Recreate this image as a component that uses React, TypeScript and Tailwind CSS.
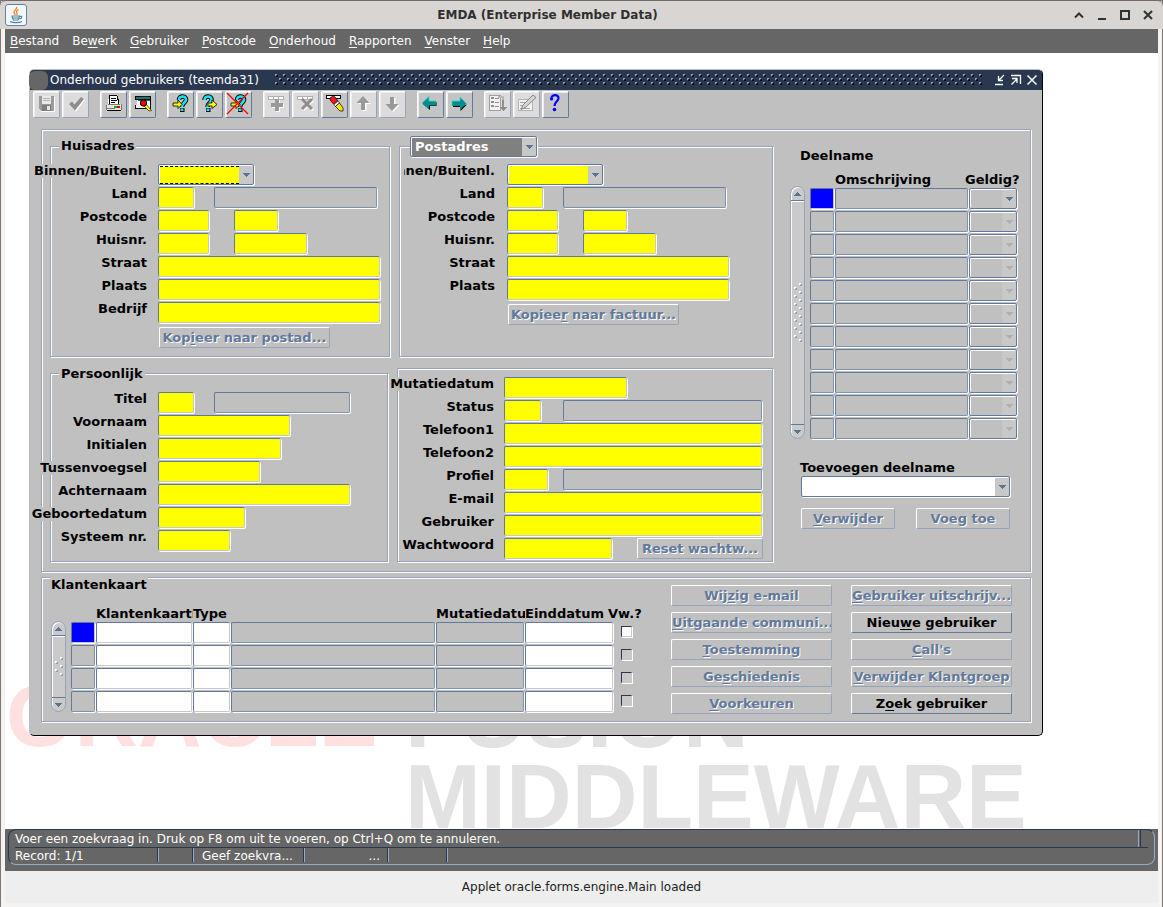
import React from "react";

const FONT = "font-['DejaVu_Sans',sans-serif]";
const ETCHED = "border border-[#95a5b9] shadow-[1px_1px_0_#fff,inset_1px_1px_0_#fff]";

/* ---------- small building blocks ---------- */

function Mnemonic({ text, at }: { text: string; at?: number }) {
  if (at === undefined) return <>{text}</>;
  return (
    <>
      {text.slice(0, at)}
      <span className="underline decoration-1 underline-offset-2">{text[at]}</span>
      {text.slice(at + 1)}
    </>
  );
}

type FieldKind = "query" | "readonly" | "plain" | "current";

const KIND: Record<FieldKind, string> = {
  query: "bg-[#ffff00] border-r-[#c8c8c8] border-b-[#c8c8c8]",
  plain: "bg-white border-r-[#c8c8c8] border-b-[#c8c8c8]",
  readonly: "bg-[#c0c0c0] border-r-[#7f92ad] border-b-[#7f92ad]",
  current: "bg-[#0000ff] border-r-[#c8c8c8] border-b-[#c8c8c8]",
};

function Field({ id, label, kind = "query", className }: { id?: string; label?: string; kind?: FieldKind; className: string }) {
  return (
    <input
      id={id}
      aria-label={label}
      readOnly={kind === "readonly" || kind === "current"}
      className={`block h-[21px] rounded-xs border border-t-[#62799b] border-l-[#62799b] px-1 shadow-[1px_1px_0_#fff] outline-none ${KIND[kind]} ${className}`}
    />
  );
}

function Combo({ id, label, options = [""], className, tone = "bg-[#ffff00]", dim = false, focused = false }: {
  id?: string; label?: string; options?: string[]; className: string; tone?: string; dim?: boolean; focused?: boolean;
}) {
  return (
    <div className={`relative flex h-[21px] rounded-xs border border-[#62799b] bg-[#c8c8c8] shadow-[1px_1px_0_#fff,inset_1px_1px_0_#fff] ${className}`}>
      <select
        id={id}
        aria-label={label}
        className={`mt-px ml-px mr-3.5 min-w-0 flex-1 appearance-none pl-[3px] text-[13px] leading-4 font-bold outline-none ${tone} ${focused ? "border-y border-dashed border-black" : ""}`}
      >
        {options.map((o) => (
          <option key={o}>{o}</option>
        ))}
      </select>
      <svg viewBox="0 0 8 4" className="pointer-events-none absolute top-2 right-0.5 h-1 w-2" shapeRendering="crispEdges">
        <path d="M0 0h7v1H0zM1 1h5v1H1zM2 2h3v1H2zM3 3h1v1H3z" fill={dim ? "#b0b0b0" : "#5b7396"} />
      </svg>
    </div>
  );
}

function PushButton({ text, at, enabled = false, className = "" }: { text: string; at?: number; enabled?: boolean; className?: string }) {
  return (
    <button
      type="button"
      disabled={!enabled}
      className={`h-[21px] overflow-hidden rounded-xs border border-t-white border-l-white text-center text-[13px] leading-4 font-bold whitespace-nowrap ${
        enabled ? "border-r-[#62799b] border-b-[#62799b] text-black" : "border-r-[#95a5b9] border-b-[#95a5b9] text-[#62799b] [text-shadow:1px_1px_0_#fff]"
      } ${className}`}
    >
      <Mnemonic text={text} at={at} />
    </button>
  );
}

function Row({ label, htmlFor, labelClass, children }: { label: string; htmlFor: string; labelClass: string; children: React.ReactNode }) {
  return (
    <div className="flex h-[23px] items-start">
      <div className={`flex shrink-0 justify-end ${labelClass}`}>
        <label htmlFor={htmlFor} className="bg-[#c0c0c0] leading-[14px] whitespace-nowrap">{label}</label>
      </div>
      {children}
    </div>
  );
}

function ScrollBar({ className, gripRows }: { className: string; gripRows: number }) {
  return (
    <div className={`flex w-[15px] shrink-0 flex-col overflow-hidden rounded-full border border-[#95a5b9] bg-[#cacaca] shadow-[inset_1px_1px_0_#fff] ${className}`}>
      <button type="button" aria-label="Omhoog" className="flex h-3.5 items-center justify-center border-b border-[#62799b] shadow-[0_1px_0_#fff]">
        <svg viewBox="0 0 7 4" className="h-1 w-[7px]" shapeRendering="crispEdges"><path d="M3 0h1v1H3zM2 1h3v1H2zM1 2h5v1H1zM0 3h7v1H0z" fill="#5b7396" /></svg>
      </button>
      <div className="flex flex-1 items-center justify-center">
        <svg width="8" height={gripRows * 4} shapeRendering="crispEdges">
          {Array.from({ length: gripRows }, (_, i) => {
            const x = i % 2 ? 0 : 5;
            return (
              <g key={i}>
                <path d={`M${x} ${i * 4}h2v1h-1v1h-1z`} fill="#fff" />
                <path d={`M${x + 2} ${i * 4 + 1}h1v2h-2v-1h1z`} fill="#8ea0b8" />
              </g>
            );
          })}
        </svg>
      </div>
      <button type="button" aria-label="Omlaag" className="flex h-3.5 items-center justify-center border-t border-[#62799b]">
        <svg viewBox="0 0 7 4" className="h-1 w-[7px]" shapeRendering="crispEdges"><path d="M0 0h7v1H0zM1 1h5v1H1zM2 2h3v1H2zM3 3h1v1H3z" fill="#5b7396" /></svg>
      </button>
    </div>
  );
}

/* ---------- toolbar ---------- */

function QueryMark({ d, dotX }: { d: string; dotX: number }) {
  return (
    <g shapeRendering="auto" fill="none">
      <path d={d} stroke="#000" strokeWidth="4.5" />
      <path d={d} stroke="#19e3f5" strokeWidth="2.6" />
      <path d={`M${dotX - 2} 17h4.500v4h-4.500z`} fill="#000" />
      <path d={`M${dotX - 1.5} 17.500h3v2.500h-3z`} fill="#19e3f5" />
    </g>
  );
}

const ENTER_ARROW = <path d="M6 12h5V9l4 4.500-4 4V15H6z" fill="#ff0" stroke="#000" strokeWidth=".8" shapeRendering="auto" />;

const ICONS: Record<string, React.ReactNode> = {
  save: (
    <>
      <path d="M6 5h15v15H8l-2-2z" fill="#9a9a9a" />
      <path d="M9 5h9v8H9z" fill="#e9e9e9" />
      <path d="M10 7h7v1h-7zM10 9h7v1h-7z" fill="#b4b4b4" />
      <path d="M9 14h9v6H9z" fill="#7c7c7c" />
      <path d="M14 15h3v4h-3z" fill="#e6e6e6" />
      <path d="M21 6h1v15H8v-1h13z" fill="#fff" />
    </>
  ),
  check: (
    <g shapeRendering="auto">
      <path d="M8 14l3-2.500 2.500 3L20 7l3 2-9 11.500z" fill="#fff" />
      <path d="M7 13l3-2.500 2.500 3L19 6l3 2-9 11.500z" fill="#8e8e8e" />
    </g>
  ),
  print: (
    <>
      <path d="M9 4h8l3 9H8z" fill="#fff" />
      <path d="M9 4h8v1h1v3h1v5h-1V9h-1V5h-7v8H9z" fill="#000" />
      <path d="M11 7h5v1h-5zM11 9h6v1h-6zM11 11h4v1h-4z" fill="#000" />
      <path d="M7 13h14v6H7z" fill="#e4e4da" />
      <path d="M6 14h1v5H6zM21 13h1v6h-1zM8 13h12v1H8zM7 17h8v1H7z" fill="#777" />
      <path d="M14 15h3v2h-3z" fill="#0b0" />
      <path d="M17 15h3v2h-3z" fill="#e00" />
      <path d="M7 19h14v1H7z" fill="#000" />
    </>
  ),
  list: (
    <>
      <path d="M6.500 5.500h15v3h-15z" fill="#008080" stroke="#000" />
      <path d="M6.500 8.500h15v9h-15z" fill="#fff" stroke="#000" />
      <path d="M6 9h2v5H6z" fill="#c4c4c4" />
      <path d="M9 9h12v1H9z" fill="#008080" />
      <g shapeRendering="auto">
        <path d="M17 13l5.500 6.500-2.500.5-5-5z" fill="#ff0" stroke="#000" strokeWidth=".6" />
        <circle cx="14.500" cy="12" r="3.200" fill="#f00" stroke="#000" />
      </g>
    </>
  ),
  enter: (
    <>
      <QueryMark d="M12 9c0-5 7.500-4.500 7 0-.3 2.500-4 3-4 7" dotX={15} />
      {ENTER_ARROW}
    </>
  ),
  execute: (
    <>
      <QueryMark d="M8.500 9c0-5 7.500-4.500 7 0-.3 2.500-4 3-4 7" dotX={12} />
      <path d="M12 12h4V9l5 4.500-5 4V15h-4z" fill="#ff0" stroke="#000" strokeWidth=".8" shapeRendering="auto" />
    </>
  ),
  cancel: (
    <>
      <QueryMark d="M12 9c0-5 7.500-4.500 7 0-.3 2.500-4 3-4 7" dotX={15} />
      {ENTER_ARROW}
      <path d="M2 2l21 21M23 2L2 23" stroke="#f00" strokeWidth="1.300" shapeRendering="auto" />
    </>
  ),
  insert: (
    <>
      <path d="M5.500 5.500h15v3h-15z" fill="#fff" stroke="#b0b0b0" />
      <path d="M10.500 5v4M15.500 5v4" stroke="#b0b0b0" />
      <path d="M13 9h4v4h4v4h-4v4h-4v-4H9v-4h4z" fill="#fff" />
      <path d="M12 8h4v4h4v4h-4v4h-4v-4H8v-4h4z" fill="#9a9a9a" />
    </>
  ),
  remove: (
    <>
      <path d="M5.500 5.500h15v3h-15z" fill="#fff" stroke="#b0b0b0" />
      <path d="M10.500 5v4M15.500 5v4" stroke="#b0b0b0" />
      <g shapeRendering="auto" strokeWidth="3">
        <path d="M11 9l10 10M21 9L11 19" stroke="#fff" />
        <path d="M10 8l10 10M20 8L10 18" stroke="#8e8e8e" />
      </g>
    </>
  ),
  clear: (
    <>
      <path d="M5 4h15v4H5z" fill="#000" />
      <path d="M6 5h13v2H6z" fill="#fff" />
      <g shapeRendering="auto">
        <path d="M9.500 7c1-1.800 3-2.300 4.500-1l3 4-4 3.500-3.500-4c-.6-1-.5-1.600 0-2.500z" fill="#f01818" stroke="#000" strokeWidth=".7" />
        <path d="M13 13.500l4-3.500 1.500 2-4 3.500z" fill="#fff" stroke="#000" strokeWidth=".6" />
        <path d="M14.500 15.500l4-3.500 3.500 5v3h-3z" fill="#ffe800" stroke="#000" strokeWidth=".7" />
      </g>
    </>
  ),
  up: (
    <g shapeRendering="auto">
      <path d="M14 6l7 7h-4.500v7h-4v-7H8z" fill="#fff" />
      <path d="M13 5l6.500 7H15v7h-4v-7H6.500z" fill="#999" />
    </g>
  ),
  down: (
    <g shapeRendering="auto">
      <path d="M14 21l7-7h-4.500V7h-4v7H8z" fill="#fff" />
      <path d="M13 20l6.500-7H15V6h-4v7H6.500z" fill="#999" />
    </g>
  ),
  prev: (
    <g shapeRendering="auto">
      <path d="M6 13l7 6v-4h6.500v-4H19v3z" fill="#000" />
      <path d="M5 12l7-6.500V10h7v4.500h-7v4z" fill="#008c8c" />
      <path d="M5 12l7-6.500V10h7" fill="none" stroke="#30d8d8" strokeWidth=".8" />
    </g>
  ),
  next: (
    <g shapeRendering="auto">
      <path d="M21 13.500L14.500 20v-4H7v-1h8z" fill="#000" />
      <path d="M20.500 12.500L14 6v4H6v5h8v4z" fill="#008c8c" />
      <path d="M6 15v-5h8V6l6.500 6.500" fill="none" stroke="#30d8d8" strokeWidth=".8" />
    </g>
  ),
  block: (
    <>
      <path d="M5.500 4.500h11v15h-11z" fill="#f2f2f2" stroke="#a0a0a0" />
      <path d="M7 6h3v2H7zM7 10h3v2H7zM7 14h3v2H7zM11 7h4v1h-4zM11 11h4v1h-4zM11 15h4v1h-4z" fill="#8e8e8e" />
      <path d="M14 5h6v4h-2V7h-4z" fill="#b8b8b8" />
      <path d="M18 9h2v7h3l-4 4-4-4h3z" fill="#8e8e8e" />
    </>
  ),
  edit: (
    <>
      <path d="M5.500 8.500h14v11h-14z" fill="#f2f2f2" stroke="#b4b4b4" />
      <path d="M7 11h8v1H7zM7 14h6v1H7zM7 17h10v1H7z" fill="#a4a4a4" />
      <path d="M20 4l3 2.500L13 16l-5 2.500 2-4.500z" fill="#d4d4d4" stroke="#848484" shapeRendering="auto" />
    </>
  ),
  help: (
    <g shapeRendering="auto">
      <path d="M9.500 8.500C8.500 3 17 2.500 16.500 7.500c-.3 3-4 3.500-4 7.500" fill="none" stroke="#0000ff" strokeWidth="2.200" />
      <circle cx="9.500" cy="8" r="1.500" fill="#0000ff" />
      <circle cx="12.500" cy="18.500" r="1.800" fill="#0000ff" />
    </g>
  ),
};

const TOOLBAR: { icon: string; label: string; off?: boolean }[][] = [
  [{ icon: "save", label: "Opslaan", off: true }, { icon: "check", label: "Akkoord", off: true }],
  [{ icon: "print", label: "Afdrukken" }, { icon: "list", label: "Zoeklijst" }],
  [{ icon: "enter", label: "Zoekvraag invoeren" }, { icon: "execute", label: "Zoekvraag uitvoeren" }, { icon: "cancel", label: "Zoekvraag annuleren" }],
  [
    { icon: "insert", label: "Record invoegen", off: true },
    { icon: "remove", label: "Record verwijderen", off: true },
    { icon: "clear", label: "Record wissen" },
    { icon: "up", label: "Vorig record", off: true },
    { icon: "down", label: "Volgend record", off: true },
  ],
  [{ icon: "prev", label: "Vorig blok" }, { icon: "next", label: "Volgend blok" }],
  [{ icon: "block", label: "Keuzelijst", off: true }, { icon: "edit", label: "Bewerken", off: true }, { icon: "help", label: "Help" }],
];

function Toolbar() {
  return (
    <div className="flex gap-[11px] pt-px pl-[3px]">
      {TOOLBAR.map((group, i) => (
        <div key={i} className="flex gap-0.5">
          {group.map((b) => (
            <button
              key={b.icon}
              type="button"
              aria-label={b.label}
              disabled={b.off}
              className={`size-[27px] rounded-xs border border-t-white border-l-white shadow-[inset_1px_1px_0_#ededed] ${
                b.off ? "border-r-[#95a5b9] border-b-[#95a5b9] bg-[#dcdcdc]" : "border-r-[#62799b] border-b-[#62799b] bg-[#c4c4c4]"
              }`}
            >
              <svg viewBox="1 1 25 25" className="size-[25px]" shapeRendering="crispEdges">{ICONS[b.icon]}</svg>
            </button>
          ))}
        </div>
      ))}
    </div>
  );
}

/* ---------- form sections ---------- */

function AddressFields({ prefix, label, rows, focused }: { prefix: string; label: string; rows: number; focused?: boolean }) {
  const all = [
    { name: "Binnen/Buitenl.", key: "bb", el: <Combo id={`${prefix}-bb`} className="w-[96px]" focused={focused} /> },
    { name: "Land", key: "land", el: <><Field id={`${prefix}-land`} className="w-9" /><Field kind="readonly" label="Landnaam" className="ml-5 w-[163px]" /></> },
    { name: "Postcode", key: "pc", el: <><Field id={`${prefix}-pc`} className="w-[51px]" /><Field label="Postcode letters" className="ml-[25px] w-[44px]" /></> },
    { name: "Huisnr.", key: "nr", el: <><Field id={`${prefix}-nr`} className="w-[51px]" /><Field label="Toevoeging" className="ml-[25px] w-[73px]" /></> },
    { name: "Straat", key: "str", el: <Field id={`${prefix}-str`} className="w-[222px]" /> },
    { name: "Plaats", key: "pl", el: <Field id={`${prefix}-pl`} className="w-[222px]" /> },
    { name: "Bedrijf", key: "bd", el: <Field id={`${prefix}-bd`} className="w-[222px]" /> },
  ];
  return (
    <>
      {all.slice(0, rows).map((r) => (
        <Row key={r.key} label={r.name} htmlFor={`${prefix}-${r.key}`} labelClass={label}>{r.el}</Row>
      ))}
    </>
  );
}

function HomeAddress() {
  return (
    <section className={`h-[211px] ${ETCHED}`}>
      <h2 className="-mt-[9px] ml-2 w-fit bg-[#c0c0c0] px-0.5 leading-4">Huisadres</h2>
      <div className="pt-2.5">
        <AddressFields prefix="huis" label="mr-[11px] w-[96px]" rows={7} focused />
        <PushButton text="Kopieer naar postad..." at={3} className="mt-0.5 ml-[108px] w-[171px]" />
      </div>
    </section>
  );
}

function PostalAddress() {
  return (
    <section className={`h-[211px] ${ETCHED}`}>
      <Combo
        label="Adressoort"
        options={["Postadres", "Factuuradres"]}
        tone="bg-[#808080] text-white"
        className="-mt-[11px] ml-2.5 w-[127px]"
      />
      <div className="pt-[7px]">
        <AddressFields prefix="post" label="ml-1 mr-3 w-[91px] overflow-hidden" rows={6} />
        <PushButton text="Kopieer naar factuur..." at={6} className="mt-0.5 ml-[108px] w-[171px]" />
      </div>
    </section>
  );
}

function Personal() {
  const rows: [string, string][] = [
    ["Voornaam", "w-[132px]"],
    ["Initialen", "w-[123px]"],
    ["Tussenvoegsel", "w-[102px]"],
    ["Achternaam", "w-[192px]"],
    ["Geboortedatum", "w-[87px]"],
    ["Systeem nr.", "w-[72px]"],
  ];
  return (
    <section className={`mt-4 mr-0.5 h-[189px] ${ETCHED}`}>
      <h2 className="-mt-2 ml-2 w-fit bg-[#c0c0c0] px-0.5 leading-4">Persoonlijk</h2>
      <div className="pt-2.5">
        <Row label="Titel" htmlFor="p-titel" labelClass="mr-[11px] w-[96px]">
          <Field id="p-titel" className="w-9" />
          <Field kind="readonly" label="Titelomschrijving" className="ml-5 w-[136px]" />
        </Row>
        {rows.map(([name, w]) => (
          <Row key={name} label={name} htmlFor={`p-${name}`} labelClass="mr-[11px] w-[96px]">
            <Field id={`p-${name}`} className={w} />
          </Row>
        ))}
      </div>
    </section>
  );
}

function Contact() {
  const lc = "mr-2.5 w-[96px]";
  return (
    <section className={`mt-[11px] -ml-0.5 h-[194px] pt-2 ${ETCHED}`}>
      <Row label="Mutatiedatum" htmlFor="c-mut" labelClass={lc}><Field id="c-mut" className="w-[123px]" /></Row>
      <Row label="Status" htmlFor="c-status" labelClass={lc}>
        <Field id="c-status" className="w-[37px]" />
        <Field kind="readonly" label="Statusomschrijving" className="ml-[22px] w-[199px]" />
      </Row>
      <Row label="Telefoon1" htmlFor="c-tel1" labelClass={lc}><Field id="c-tel1" className="w-[258px]" /></Row>
      <Row label="Telefoon2" htmlFor="c-tel2" labelClass={lc}><Field id="c-tel2" className="w-[258px]" /></Row>
      <Row label="Profiel" htmlFor="c-profiel" labelClass={lc}>
        <Field id="c-profiel" className="w-[44px]" />
        <Field kind="readonly" label="Profielomschrijving" className="ml-[15px] w-[199px]" />
      </Row>
      <Row label="E-mail" htmlFor="c-mail" labelClass={lc}><Field id="c-mail" className="w-[258px]" /></Row>
      <Row label="Gebruiker" htmlFor="c-gebr" labelClass={lc}><Field id="c-gebr" className="w-[258px]" /></Row>
      <Row label="Wachtwoord" htmlFor="c-ww" labelClass={lc}>
        <Field id="c-ww" className="w-[108px]" />
        <PushButton text="Reset wachtw..." className="ml-[25px] w-[126px]" />
      </Row>
    </section>
  );
}

function Participation() {
  return (
    <section className="ml-[17px] min-w-0 flex-1 pr-3">
      <h2 className="ml-2.5 pt-[18px] leading-4">Deelname</h2>
      <div className="flex items-end pt-2">
        <ScrollBar className="mb-px h-[253px]" gripRows={15} />
        <div className="ml-[5px] min-w-0 flex-1">
          <table className="w-full table-fixed border-separate border-spacing-0">
            <colgroup>
              <col className="w-[25px]" />
              <col />
              <col className="w-[49px]" />
            </colgroup>
            <thead>
              <tr className="text-left leading-[15px]">
                <th className="p-0"></th>
                <th className="p-0">Omschrijving</th>
                <th className="p-0"><div className="-ml-1 whitespace-nowrap">Geldig?</div></th>
              </tr>
            </thead>
            <tbody>
              {Array.from({ length: 11 }, (_, i) => (
                <tr key={i} className="h-[23px]">
                  <td className="p-0 pr-px"><Field kind={i === 0 ? "current" : "readonly"} label={`Recordindicator ${i + 1}`} className="w-full" /></td>
                  <td className="p-0 pr-px"><Field kind="readonly" label={`Omschrijving ${i + 1}`} className="w-full" /></td>
                  <td className="p-0 pr-px"><Combo label={`Geldig ${i + 1}`} tone="bg-[#c0c0c0]" dim={i > 0} className="w-full" /></td>
                </tr>
              ))}
            </tbody>
          </table>
        </div>
      </div>
      <div className="mr-2 ml-[11px]">
        <label htmlFor="toevoegen" className="-ml-px mt-5 block leading-4">Toevoegen deelname</label>
        <Combo id="toevoegen" tone="bg-white" className="" />
        <div className="mt-[11px] flex justify-between">
          <PushButton text="Verwijder" at={0} className="w-[94px]" />
          <PushButton text="Voeg toe" className="w-[94px]" />
        </div>
      </div>
    </section>
  );
}

function CustomerCards() {
  const actions: [string, number, boolean][][] = [
    [["Wijzig e-mail", 3, false], ["Uitgaande communi...", 0, false], ["Toestemming", 0, false], ["Geschiedenis", 2, false], ["Voorkeuren", 0, false]],
    [["Gebruiker uitschrijv...", 0, false], ["Nieuwe gebruiker", 4, true], ["Call's", 0, false], ["Verwijder Klantgroep", 0, false], ["Zoek gebruiker", 1, true]],
  ];
  return (
    <section className={`mx-[11px] mt-[5px] h-[145px] ${ETCHED}`}>
      <div className="flex">
        <div className="flex min-w-0 flex-1 flex-col">
          <h2 className="-mt-px ml-2 w-fit bg-[#c0c0c0] px-px pt-px leading-[14px]">Klantenkaart</h2>
          <div className="flex items-end pt-3.5 pl-[9px]">
            <ScrollBar className="mb-px h-[91px]" gripRows={5} />
            <div className="ml-[5px] min-w-0 flex-1">
              <table className="w-full table-fixed border-separate border-spacing-0">
                <colgroup>
                  <col className="w-[25px]" />
                  <col className="w-[97px]" />
                  <col className="w-[38px]" />
                  <col />
                  <col className="w-[89px]" />
                  <col className="w-[89px]" />
                  <col className="w-[29px]" />
                </colgroup>
                <thead>
                  <tr className="text-left leading-[15px]">
                    <th className="p-0"></th>
                    <th className="p-0"><div className="overflow-hidden whitespace-nowrap">Klantenkaartnr</div></th>
                    <th className="p-0">Type</th>
                    <th className="p-0"></th>
                    <th className="p-0"><div className="overflow-hidden whitespace-nowrap">Mutatiedatum</div></th>
                    <th className="p-0">Einddatum</th>
                    <th className="p-0"><div className="-ml-1.5 whitespace-nowrap">Vw.?</div></th>
                  </tr>
                </thead>
                <tbody>
                  {[1, 2, 3, 4].map((n) => (
                    <tr key={n} className="h-[23px]">
                      <td className="p-0 pr-px"><Field kind={n === 1 ? "current" : "readonly"} label={`Kaartindicator ${n}`} className="w-full" /></td>
                      <td className="p-0 pr-px"><Field kind="plain" label={`Klantenkaartnr ${n}`} className="w-full" /></td>
                      <td className="p-0 pr-px"><Field kind="plain" label={`Type ${n}`} className="w-full" /></td>
                      <td className="p-0 pr-px"><Field kind="readonly" label={`Type omschrijving ${n}`} className="w-full" /></td>
                      <td className="p-0 pr-px"><Field kind="readonly" label={`Mutatiedatum ${n}`} className="w-full" /></td>
                      <td className="p-0 pr-px"><Field kind="plain" label={`Einddatum ${n}`} className="w-full" /></td>
                      <td className="p-0 pt-[5px] pl-[7px] align-top">
                        <input
                          type="checkbox"
                          aria-label={`Vervallen ${n}`}
                          className={`block size-[11px] appearance-none border border-t-[#29374f] border-l-[#29374f] border-r-[#c8c8c8] border-b-[#c8c8c8] shadow-[1px_1px_0_#fff] ${n === 1 ? "bg-white" : "bg-[#c8c8c8]"}`}
                        />
                      </td>
                    </tr>
                  ))}
                </tbody>
              </table>
            </div>
          </div>
        </div>
        <div className="mt-[7px] mr-[18px] ml-7 flex gap-[19px]">
          {actions.map((col, i) => (
            <div key={i} className="flex w-[161px] flex-col gap-1.5">
              {col.map(([t, at, on]) => <PushButton key={t} text={t} at={at} enabled={on} />)}
            </div>
          ))}
        </div>
      </div>
    </section>
  );
}

/* ---------- windows ---------- */

function FormWindow() {
  return (
    <main className="relative mt-4 mr-[115px] ml-6 rounded-[5px] border border-t-[#b9bec6] border-l-[#b9bec6] border-r-black border-b-black bg-[#c0c0c0] pb-[13px] text-[13px] font-bold text-black">
      <header className="flex h-5 items-center rounded-t-sm bg-[#29374f] font-normal text-white">
        <span className="-ml-px size-[19px] rounded-md bg-[#666]" />
        <h1 className="ml-0.5 text-[12px] leading-4 whitespace-nowrap">Onderhoud gebruikers (teemda31)</h1>
        <svg className="mr-[11px] ml-4 h-3 flex-1" shapeRendering="crispEdges" aria-hidden="true">
          <defs>
            <pattern id="grip" width="8" height="8" patternUnits="userSpaceOnUse">
              <path d="M0 0h2v1H1v1H0zM4 4h2v1H5v1H4z" fill="#8ea3c0" />
              <path d="M2 1h1v2H1V2h1zM6 5h1v2H5V6h1z" fill="#000" />
            </pattern>
          </defs>
          <rect width="100%" height="12" fill="url(#grip)" />
        </svg>
        <div className="mr-1 flex gap-1">
          <button type="button" aria-label="Minimaliseren">
            <svg viewBox="0 0 12 12" className="block size-3" fill="none" stroke="#fff" strokeWidth="1.300"><path d="M1 10.500h8M10 1L5 6M4.500 2v4.500H9" /></svg>
          </button>
          <button type="button" aria-label="Maximaliseren">
            <svg viewBox="0 0 12 12" className="block size-3" fill="none" stroke="#fff" strokeWidth="1.300"><path d="M1 1.500h9.500V10M1.500 10.500l5-5M2 4.500h5V9" /></svg>
          </button>
          <button type="button" aria-label="Sluiten">
            <svg viewBox="0 0 12 12" className="block size-3" fill="none" stroke="#fff" strokeWidth="1.500"><path d="M1.500 1.500l9 9M10.500 1.500l-9 9" /></svg>
          </button>
        </div>
      </header>
      <Toolbar />
      <div className={`mx-[11px] mt-[11px] flex h-[443px] ${ETCHED}`}>
        <div className="ml-2 grid shrink-0 grid-cols-[340px_374px] content-start gap-x-[9px] pt-4">
          <div><HomeAddress /><Personal /></div>
          <div><PostalAddress /><Contact /></div>
        </div>
        <Participation />
      </div>
      <CustomerCards />
    </main>
  );
}

function TitleBar() {
  return (
    <header className="flex h-[29px] items-center rounded-t-md border-t border-[#6f6b68] bg-[#d9d5d2] px-1 text-[#303030]">
      <svg viewBox="0 0 22 22" className="ml-px size-[22px]">
        <rect x=".5" y=".5" width="21" height="21" rx="2.5" fill="#f4f7fa" stroke="#5f83a5" />
        <path d="M11.5 3c1 2-3 3.500-2.500 5.500.2 1 1.200 1.500 1.200 2.500M13.500 5.500c-2 1.200-2.500 2-1.500 3.500.4.800.2 1.500-.5 2" fill="none" stroke="#ee8422" strokeWidth="1.300" />
        <path d="M6.500 12h8.500M7 12c.3 2 .8 3 1.500 4h4.500c.7-1 1.200-2 1.500-4M15 12.500c2-.8 2.800 1.300-.5 2.500M5 17.500c3 1.500 9 1.500 12 0M8 14h6" fill="none" stroke="#5382a1" strokeWidth="1.200" />
      </svg>
      <h1 className="flex-1 pr-1 text-center text-[12px] leading-4 font-bold">EMDA (Enterprise Member Data)</h1>
      <div className="mr-1 flex gap-[9px]">
        {[
          ["Oprollen", "M3 9.500L7 5.500l4 4"],
          ["Minimaliseren", "M3 11h8"],
          ["Maximaliseren", "M3 3h8v8H3z"],
          ["Sluiten", "M3 3l8 8M11 3l-8 8"],
        ].map(([label, d]) => (
          <button key={label} type="button" aria-label={label}>
            <svg viewBox="0 0 14 14" className="block size-3.5" fill="none" stroke="#2e3436" strokeWidth="2"><path d={d} /></svg>
          </button>
        ))}
      </div>
    </header>
  );
}

function StatusBar() {
  const sep = "border-r border-[#97abc7] shadow-[inset_-1px_0_0_#29374f]";
  return (
    <footer className="bg-[#666] px-[3px] pb-1.5 text-[12px] leading-4 text-white">
      <div className="rounded-lg border border-t-[#29374f] border-r-[#97abc7] border-b-[#97abc7] border-l-[#29374f] px-1.5">
        <div className="flex h-[18px] border-b border-[#29374f]">
          <p className="flex-1 border-r border-[#97abc7] pt-px">Voer een zoekvraag in. Druk op F8 om uit te voeren, op Ctrl+Q om te annuleren.</p>
          <span className="ml-px w-2 border-l border-[#29374f]" />
        </div>
        <div className="flex h-4 pb-0.5">
          <span className={`w-36 ${sep}`}>Record: 1/1</span>
          <span className={`w-[35px] ${sep}`} />
          <span className={`w-[111px] pl-2 whitespace-nowrap ${sep}`}>Geef zoekvra...</span>
          <span className={`w-[84px] pr-2 text-right ${sep}`}>...</span>
          <span className={`w-[59px] ${sep}`} />
        </div>
      </div>
    </footer>
  );
}

export default function App() {
  const menus = ["Bestand", "Bewerk", "Gebruiker", "Postcode", "Onderhoud", "Rapporten", "Venster", "Help"];
  const mnemonics = [0, 2, 0, 0, 0, 0, 0, 0];
  return (
    <div className={`flex min-h-screen flex-col bg-[#f5f3f1] shadow-[inset_0_0_0_1px_#7b7774] ${FONT}`}>
      <TitleBar />
      <div className="mx-[5px] mb-[5px] flex flex-1 flex-col">
        <nav className="flex h-6 items-center gap-[3px] bg-[#666] text-[12px] leading-4 text-white">
          {menus.map((m, i) => (
            <button key={m} type="button" className="px-[5px]"><Mnemonic text={m} at={mnemonics[i]} /></button>
          ))}
        </nav>
        <div className="relative flex-1 overflow-hidden bg-white pb-[93px]">
          <div aria-hidden="true" className="absolute -bottom-2 left-0 grid grid-cols-[400px_auto] font-['Liberation_Sans',sans-serif] text-[91px] leading-[81px] font-bold text-[#e2e2e2]">
            <span className="pl-px text-[88px] text-[#ffe0e0]">ORACLE</span>
            <span>FUSION</span>
            <span />
            <span>MIDDLEWARE</span>
          </div>
          <FormWindow />
        </div>
        <StatusBar />
        <p className="bg-[#eee] py-2 text-center text-[12px] leading-4 text-[#222]">Applet oracle.forms.engine.Main loaded</p>
      </div>
    </div>
  );
}
